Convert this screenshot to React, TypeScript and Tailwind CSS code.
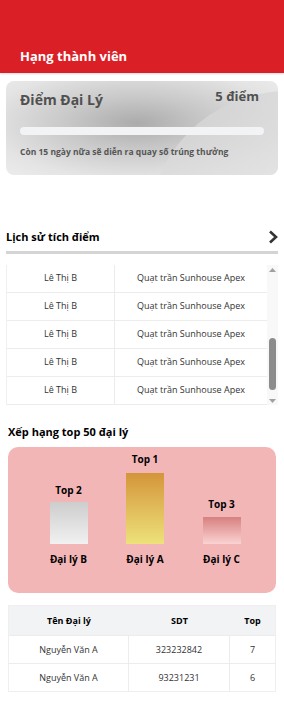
import React from "react";

const history = [
  { name: "Lê Thị B", product: "Quạt trần Sunhouse Apex" },
  { name: "Lê Thị B", product: "Quạt trần Sunhouse Apex" },
  { name: "Lê Thị B", product: "Quạt trần Sunhouse Apex" },
  { name: "Lê Thị B", product: "Quạt trần Sunhouse Apex" },
  { name: "Lê Thị B", product: "Quạt trần Sunhouse Apex" },
];

const ranking = [
  { name: "Nguyễn Văn A", phone: "323232842", top: 7 },
  { name: "Nguyễn Văn A", phone: "93231231", top: 6 },
];

function Podium({
  label,
  name,
  bar,
  labelGap,
}: {
  label: string;
  name: string;
  bar: string;
  labelGap: string;
}) {
  return (
    <div className="flex w-[39px] flex-col items-center">
      <div className={`whitespace-nowrap text-[10px] font-bold text-black ${labelGap}`}>{label}</div>
      <div className={`w-[38px] ${bar}`} />
      <div className="mt-[8px] whitespace-nowrap text-[10px] font-bold text-black">{name}</div>
    </div>
  );
}

export default function App() {
  return (
    <div
      className="min-h-[704px] w-[284px] bg-white"
      style={{ fontFamily: '"Open Sans", "Noto Sans", sans-serif' }}
    >
      {/* Header */}
      <div className="flex h-[73px] items-end bg-[#da1f27] px-[20px] pb-[7px] shadow-[0_1px_2px_rgba(0,0,0,0.15)]">
        <h1 className="text-[13px] font-bold text-white">Hạng thành viên</h1>
      </div>

      {/* Points card */}
      <div className="relative mx-[6px] mt-[8px] h-[94px] overflow-hidden rounded-[8px] bg-[radial-gradient(ellipse_at_48%_45%,#ababab_0%,#c8c8c8_35%,#e4e4e4_75%,#ededed_100%)]">
        <div className="absolute -right-[40px] top-[10px] h-[160px] w-[170px] rounded-tl-[140px] bg-[linear-gradient(160deg,#d2d2d2,#e0e0e0_60%,#ececec)] opacity-80" />
        <div className="relative flex h-full flex-col px-[14px] pt-[6px]">
          <div className="flex items-start justify-between">
            <span className="mt-[2px] text-[14px] font-bold text-[#505050]">Điểm Đại Lý</span>
            <span className="mr-[5px] text-[13px] font-bold text-[#505050]">5 điểm</span>
          </div>
          <div className="mt-[17px] h-[8px] rounded-full bg-[#f2f3f5]" />
          <div className="mt-[11px] text-[8.5px] font-bold text-[#555]">
            Còn 15 ngày nữa sẽ diễn ra quay số trúng thưởng
          </div>
        </div>
      </div>

      {/* History */}
      <div className="mx-[6px] mt-[54px]">
        <div className="flex items-center justify-between">
          <span className="text-[11px] font-bold text-black">Lịch sử tích điểm</span>
          <svg width="12" height="14" viewBox="0 0 12 14" className="mr-[-1px]">
            <path d="M3 1.5 L9 7 L3 12.5" fill="none" stroke="#333" strokeWidth="2.6" />
          </svg>
        </div>
        <div className="mt-[5px] h-[3px] bg-[#d4d4d4]" />
        <div className="mt-[11px] flex h-[140px] overflow-hidden">
          <div className="flex-1 border-l border-[#f0f0f0]">
            {history.map((row, i) => (
              <div key={i} className="flex h-[28px] border-b border-[#ececec] text-[9px] text-[#333]">
                <div className="flex w-[108px] items-center justify-center border-r border-[#ececec]">
                  {row.name}
                </div>
                <div className="flex flex-1 items-center justify-center">{row.product}</div>
              </div>
            ))}
          </div>
          <div className="flex w-[11px] flex-col items-center bg-[#f8f8f8]">
            <svg width="7" height="5" viewBox="0 0 7 5" className="mt-[3px]">
              <path d="M0 4 L3.5 0 L7 4 Z" fill="#a0a0a0" />
            </svg>
            <div className="mt-[65px] h-[52px] w-[7px] rounded-full bg-[#8c8c8c]" />
            <svg width="7" height="5" viewBox="0 0 7 5" className="mt-[9px]">
              <path d="M0 0 L3.5 4 L7 0 Z" fill="#a0a0a0" />
            </svg>
          </div>
        </div>
      </div>

      {/* Ranking */}
      <div className="mx-[8px] mt-[19px]">
        <div className="text-[11px] font-bold text-black">Xếp hạng top 50 đại lý</div>
        <div className="mt-[7px] flex h-[146px] items-start justify-between rounded-[10px] bg-[#f3b6b7] pl-[41px] pr-[35px] pt-[5px]">
          <div className="mt-[31px]">
            <Podium
              label="Top 2"
              name="Đại lý B"
              labelGap="mb-[4px]"
              bar="h-[42px] bg-[linear-gradient(180deg,#cdcdcd,#f1f1f1)]"
            />
          </div>
          <div>
            <Podium
              label="Top 1"
              name="Đại lý A"
              labelGap="mb-[6px]"
              bar="h-[71px] bg-[linear-gradient(180deg,#d4953a,#ede27a)]"
            />
          </div>
          <div className="mt-[45px]">
            <Podium
              label="Top 3"
              name="Đại lý C"
              labelGap="mb-[5px]"
              bar="h-[27px] bg-[linear-gradient(180deg,#d7807f,#fad3d2)]"
            />
          </div>
        </div>

        <div className="mt-[12px] border border-[#efefef] text-[9px] text-[#333]">
          <div className="flex h-[29px] bg-[#f2f3f5] font-bold text-black">
            <div className="flex w-[120px] items-center justify-center">Tên Đại lý</div>
            <div className="flex w-[101px] items-center justify-center">SDT</div>
            <div className="flex flex-1 items-center justify-center">Top</div>
          </div>
          {ranking.map((r, i) => (
            <div key={i} className="flex h-[28px] border-t border-[#ececec]">
              <div className="flex w-[120px] items-center justify-center border-r border-[#ececec]">{r.name}</div>
              <div className="flex w-[101px] items-center justify-center border-r border-[#ececec]">{r.phone}</div>
              <div className="flex flex-1 items-center justify-center">{r.top}</div>
            </div>
          ))}
        </div>
      </div>
    </div>
  );
}
